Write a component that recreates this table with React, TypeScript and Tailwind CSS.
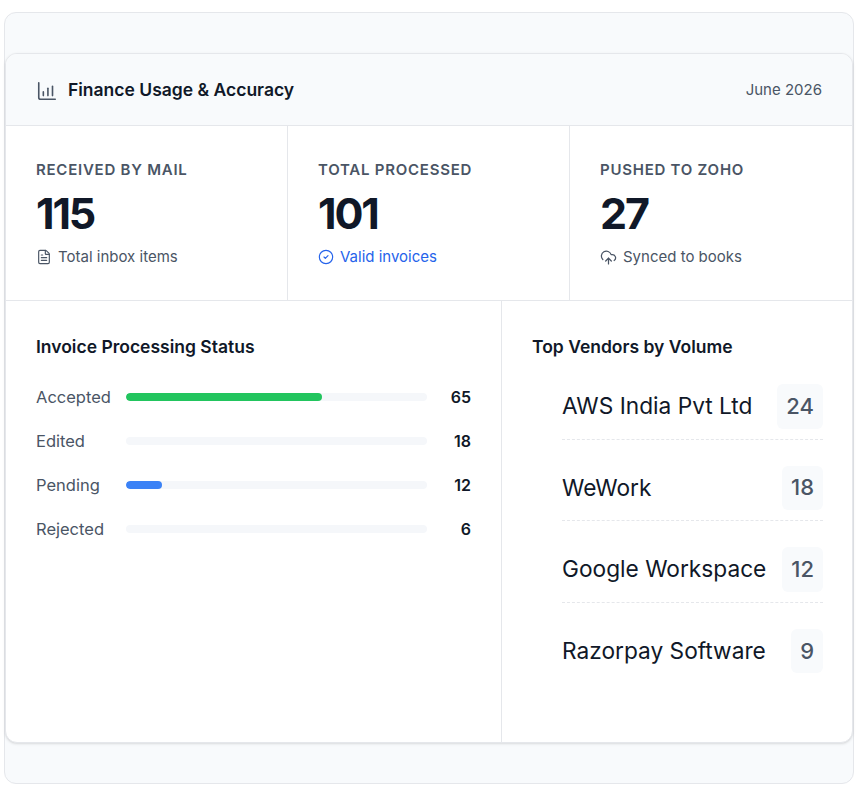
import { CircleCheck, CloudUpload, FileText } from 'lucide-react';

const stats = [
  { label: 'Received by mail', value: '115', note: 'Total inbox items', icon: 'file' },
  { label: 'Total processed', value: '101', note: 'Valid invoices', icon: 'check' },
  { label: 'Pushed to Zoho', value: '27', note: 'Synced to books', icon: 'cloud' },
];

const statuses = [
  { label: 'Accepted', count: 65, pct: 65, bar: 'bg-[#22c55e]' },
  { label: 'Edited', count: 18, pct: 18, bar: '' },
  { label: 'Pending', count: 12, pct: 12, bar: 'bg-[#3b82f6]' },
  { label: 'Rejected', count: 6, pct: 6, bar: '' },
];

const vendors = [
  { name: 'AWS India Pvt Ltd', count: 24 },
  { name: 'WeWork', count: 18 },
  { name: 'Google Workspace', count: 12 },
  { name: 'Razorpay Software', count: 9 },
];

const ChartIcon = () => (
  <svg width="22" height="22" viewBox="0 0 24 24" fill="none" stroke="currentColor" strokeWidth="1.75" strokeLinecap="round" strokeLinejoin="round">
    <path d="M3 3v16a2 2 0 0 0 2 2h16" />
    <path d="M8 17v-4" />
    <path d="M13 17V9" />
    <path d="M18 17V7" />
  </svg>
);

const StatNote = ({ icon, note }: { icon: string; note: string }) => {
  if (icon === 'check') {
    return (
      <div className="mt-3 flex items-center gap-1.5 text-[15px] leading-5 text-[#2563eb]">
        <CircleCheck size={16} strokeWidth={1.75} />
        <span>{note}</span>
      </div>
    );
  }
  return (
    <div className="mt-3 flex items-center gap-1.5 text-[15px] leading-5 text-gray-600">
      {icon === 'file' ? <FileText size={16} strokeWidth={1.75} /> : <CloudUpload size={17} strokeWidth={1.75} />}
      <span>{note}</span>
    </div>
  );
};

export default function App() {
  return (
    <div className="min-h-screen bg-white pt-3 pr-[2px] pl-1 font-['Inter',sans-serif]">
      <div className="rounded-xl border border-gray-200 bg-[#f8fafc] py-10">
        <div className="overflow-hidden rounded-xl border border-gray-200 bg-white shadow-sm">
          {/* header */}
          <div className="flex h-[72px] items-center justify-between border-b border-gray-200 bg-[#f8fafc] pt-0.5 pr-[30px] pl-[30px]">
            <div className="flex items-center gap-2.5 text-gray-900">
              <span className="text-gray-600">
                <ChartIcon />
              </span>
              <h2 className="text-[17.5px] font-semibold">Finance Usage &amp; Accuracy</h2>
            </div>
            <span className="text-[15px] text-gray-600">June 2026</span>
          </div>

          {/* stats */}
          <div className="grid grid-cols-3 border-b border-gray-200">
            {stats.map((s, i) => (
              <div key={s.label} className={`px-[30px] pt-[34px] pb-[33px] ${i < 2 ? 'border-r border-gray-200' : ''}`}>
                <div className="text-[15px] leading-5 font-semibold uppercase tracking-wider text-gray-600">{s.label}</div>
                <div className="mt-[11px] text-[43px] leading-[44px] font-bold tracking-tighter text-gray-900">{s.value}</div>
                <StatNote icon={s.icon} note={s.note} />
              </div>
            ))}
          </div>

          {/* bottom */}
          <div className="grid h-[441px] grid-cols-[496px_1fr]">
            <div className="border-r border-gray-200 px-[30px] pt-[34px]">
              <h3 className="text-[17.5px] leading-6 font-semibold text-gray-900">Invoice Processing Status</h3>
              <div className="mt-[26px] flex flex-col gap-5">
                {statuses.map((st) => (
                  <div key={st.label} className="flex h-6 items-center">
                    <span className="w-[90px] text-[16.5px] text-gray-600">{st.label}</span>
                    <div className="h-2 flex-1 overflow-hidden rounded-full bg-[#f5f7fa]">
                      <div className={`h-full rounded-full ${st.bar}`} style={{ width: `${st.pct}%` }} />
                    </div>
                    <span className="w-[44px] text-right text-base font-semibold text-gray-900">{st.count}</span>
                  </div>
                ))}
              </div>
            </div>

            <div className="pt-[34px] pr-[29px] pl-[30px]">
              <h3 className="text-[17.5px] leading-6 font-semibold text-gray-900">Top Vendors by Volume</h3>
              <ul className="mt-[15px] flex flex-col gap-4 pl-[30px]">
                {vendors.map((v, i) => (
                  <li
                    key={v.name}
                    className={`flex items-center justify-between py-2.5 ${i < vendors.length - 1 ? 'border-b border-dashed border-gray-200' : ''}`}
                  >
                    <span className="text-[22.7px] text-gray-900">{v.name}</span>
                    <span className="flex h-[44.6px] items-center rounded-md bg-[#f8fafc] px-[9px] text-[22px] font-medium text-gray-600">
                      {v.count}
                    </span>
                  </li>
                ))}
              </ul>
            </div>
          </div>
        </div>
      </div>
    </div>
  );
}
